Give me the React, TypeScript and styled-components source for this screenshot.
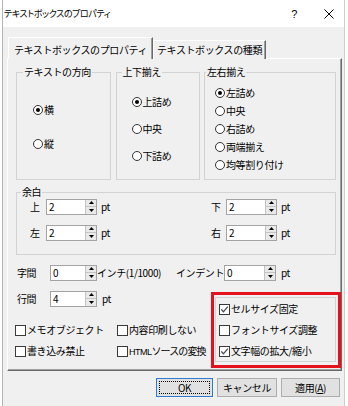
import React from "react";
import styled, { createGlobalStyle } from "styled-components";

const GlobalStyle = createGlobalStyle`
  html, body { margin: 0; padding: 0; background: #ffffff; }
  body {
    font-family: "Noto Sans CJK JP", "Noto Sans", sans-serif;
    font-size: 10px;
    letter-spacing: -0.4px;
    color: #000;
  }
  *, *::before, *::after { box-sizing: border-box; }
`;

const Screen = styled.div`
  width: 348px;
  height: 406px;
  overflow: hidden;
  background: #fff;
  padding-left: 2px;
`;

const Window = styled.div`
  width: 343px;
  height: 406px;
  border-left: 1px solid #b5b5b5;
  border-right: 1px solid #cdcdcd;
  background: #f0f0f0;
  display: flex;
  flex-direction: column;
`;

const TitleBar = styled.div`
  height: 27px;
  flex: none;
  background: #fff;
  display: flex;
  align-items: center;
  padding-left: 1px;
`;

const TitleText = styled.span`
  font-size: 9px;
  letter-spacing: -0.4px;
  font-feature-settings: "palt";
  line-height: 12px;
`;

const TitleButton = styled.span<{ $ml?: number }>`
  width: 30px;
  height: 27px;
  display: flex;
  align-items: center;
  justify-content: center;
  margin-left: ${(p) => (p.$ml === undefined ? "auto" : `${p.$ml}px`)};
  font-family: "Liberation Sans", sans-serif;
  font-size: 11px;
`;

const Body = styled.div`
  flex: 1;
  display: flex;
  flex-direction: column;
  padding: 10px 2px 0 4px;
`;

const TabBar = styled.div`
  display: flex;
  align-items: flex-end;
  height: 22px;
  padding-left: 1px;
  margin-bottom: -1px;
  position: relative;
  z-index: 1;
`;

const Tab = styled.div<{ $active?: boolean; $w: number }>`
  width: ${(p) => p.$w}px;
  height: ${(p) => (p.$active ? 22 : 19)}px;
  padding-top: ${(p) => (p.$active ? 3 : 0)}px;
  display: flex;
  align-items: center;
  justify-content: center;
  background: #f0f0f0;
  border-top: 1px solid #fff;
  border-left: 1px solid #fff;
  border-right: 1px solid #696969;
  box-shadow: inset -1px 0 0 #a0a0a0;
  line-height: 12px;
`;

const Panel = styled.div`
  width: 335px;
  height: 313px;
  border-top: 1px solid #fff;
  border-left: 1px solid #fff;
  border-right: 1px solid #696969;
  border-bottom: 1px solid #696969;
  box-shadow: inset -1px -1px 0 #a0a0a0;
  padding: 7px 0 0 8px;
  display: flex;
  flex-direction: column;
`;

const GroupRow = styled.div`
  display: flex;
  width: 320px;
  justify-content: space-between;
`;

const Group = styled.fieldset<{ $w: number; $h: number; $mt?: number }>`
  margin: ${(p) => p.$mt ?? 0}px 0 0 0;
  padding: 0;
  min-width: 0;
  width: ${(p) => p.$w}px;
  height: ${(p) => p.$h}px;
  border: 1px solid #d3d3d3;
  display: flex;
  flex-direction: column;
  justify-content: center;
`;

const Legend = styled.legend<{ $x: number }>`
  margin-left: ${(p) => p.$x}px;
  padding: 0 1px;
  height: 12px;
  line-height: 12px;
`;

const RadioList = styled.div<{ $pl: number; $gap: number; $pb?: number }>`
  display: flex;
  flex-direction: column;
  gap: ${(p) => p.$gap}px;
  padding-left: ${(p) => p.$pl}px;
  padding-bottom: ${(p) => p.$pb ?? 0}px;
`;

const OptionRow = styled.label`
  display: flex;
  align-items: center;
  gap: 1px;
  height: 12px;
  line-height: 12px;
  white-space: nowrap;
`;

const TightText = styled.span`
  letter-spacing: -0.9px;
`;

const Narrow = styled.span`
  font-family: "Liberation Sans Narrow", "Liberation Sans", sans-serif;
  font-size: 9px;
  letter-spacing: -0.5px;
`;

const RadioDot = styled.span<{ $on?: boolean }>`
  flex: none;
  width: 10px;
  height: 10px;
  border-radius: 50%;
  border: 1px solid #333;
  background: #fff;
  display: inline-flex;
  align-items: center;
  justify-content: center;
  &::after {
    content: "";
    width: 4px;
    height: 4px;
    border-radius: 50%;
    background: ${(p) => (p.$on ? "#000" : "transparent")};
  }
`;

const CheckBoxSquare = styled.span`
  flex: none;
  width: 11px;
  height: 11px;
  border: 1px solid #3a3a3a;
  background: #fff;
  display: inline-flex;
  align-items: center;
  justify-content: center;
`;

const MarginGrid = styled.div`
  display: grid;
  grid-template-columns: 181px auto;
  row-gap: 9px;
  padding-left: 13px;
`;

const FieldRow = styled.div<{ $mt?: number; $ml?: number }>`
  display: flex;
  align-items: center;
  height: 17px;
  margin-top: ${(p) => p.$mt ?? 0}px;
  margin-left: ${(p) => p.$ml ?? 0}px;
  white-space: nowrap;
`;

const FieldLabel = styled.span<{ $w: number; $mr: number; $ml?: number }>`
  width: ${(p) => p.$w}px;
  margin-right: ${(p) => p.$mr}px;
  margin-left: ${(p) => p.$ml ?? 0}px;
  line-height: 12px;
  flex: none;
`;

const Unit = styled.span<{ $ml: number; $w?: number }>`
  margin-left: ${(p) => p.$ml}px;
  width: ${(p) => (p.$w ? `${p.$w}px` : "auto")};
  line-height: 12px;
  flex: none;
`;

const SpinBox = styled.div<{ $w: number }>`
  width: ${(p) => p.$w}px;
  height: 16px;
  flex: none;
  display: flex;
  background: #fff;
  border: 1px solid #a3a3a3;
`;

const SpinValue = styled.span`
  flex: 1;
  padding-left: 2px;
  line-height: 14px;
  font-size: 10px;
`;

const SpinButtons = styled.div`
  width: 11px;
  display: flex;
  flex-direction: column;
  background: #e9e9e9;
  border-left: 1px solid #c4c4c4;
`;

const SpinArrow = styled.div<{ $top?: boolean }>`
  flex: 1;
  display: flex;
  align-items: center;
  justify-content: center;
  border-bottom: ${(p) => (p.$top ? "1px solid #c4c4c4" : "none")};
`;

const Lower = styled.div`
  display: flex;
  align-items: flex-start;
`;

const LeftCol = styled.div`
  width: 197px;
  display: flex;
  flex-direction: column;
`;

const CheckGrid = styled.div`
  display: grid;
  grid-template-columns: 102px auto;
  row-gap: 9px;
  margin-top: 17px;
  margin-left: -1px;
`;

const RedFrame = styled.div`
  margin-top: 11px;
  width: 130px;
  height: 76px;
  flex: none;
  border: 3px solid #e5121d;
  padding: 2px 2px 3px 1px;
  display: flex;
`;

const PlainGroup = styled.div`
  flex: 1;
  border: 1px solid #d3d3d3;
  padding: 5px 0 0 3px;
  display: flex;
  flex-direction: column;
  gap: 9px;
`;

const ButtonRow = styled.div`
  display: flex;
  justify-content: flex-end;
  gap: 4px;
  margin-top: 7px;
  padding-right: 2px;
`;

const DialogButton = styled.button<{ $w: number; $default?: boolean }>`
  width: ${(p) => p.$w}px;
  height: 19px;
  padding: 0;
  margin: 0;
  font-family: inherit;
  font-size: 10px;
  letter-spacing: -0.4px;
  color: #000;
  background: #e1e1e1;
  border: 1px solid ${(p) => (p.$default ? "#2f7bd4" : "#adadad")};
  outline: ${(p) => (p.$default ? "1px dotted #000" : "none")};
  outline-offset: -4px;
  line-height: 12px;
`;

const Up = () => (
  <svg width="5" height="3" viewBox="0 0 5 3">
    <polygon points="0,3 2.5,0 5,3" fill="#000" />
  </svg>
);
const Down = () => (
  <svg width="5" height="3" viewBox="0 0 5 3">
    <polygon points="0,0 5,0 2.5,3" fill="#000" />
  </svg>
);

const Spin = ({ value, w }: { value: string; w: number }) => (
  <SpinBox $w={w}>
    <SpinValue>{value}</SpinValue>
    <SpinButtons>
      <SpinArrow $top>
        <Up />
      </SpinArrow>
      <SpinArrow>
        <Down />
      </SpinArrow>
    </SpinButtons>
  </SpinBox>
);

const Radio = ({ label, on }: { label: string; on?: boolean }) => (
  <OptionRow>
    <RadioDot $on={on} />
    {label}
  </OptionRow>
);

const Check = ({ label, on }: { label: React.ReactNode; on?: boolean }) => (
  <OptionRow>
    <CheckBoxSquare>
      {on && (
        <svg width="9" height="9" viewBox="0 0 9 9">
          <polyline points="1.2,4.4 3.4,6.8 7.8,1.6" fill="none" stroke="#4a4a4a" strokeWidth="1.3" />
        </svg>
      )}
    </CheckBoxSquare>
    {label}
  </OptionRow>
);

export default function App() {
  return (
    <>
      <GlobalStyle />
      <Screen>
        <Window>
          <TitleBar>
            <TitleText>テキストボックスのプロパティ</TitleText>
            <TitleButton>?</TitleButton>
            <TitleButton $ml={5}>
              <svg width="10" height="10" viewBox="0 0 10 10">
                <path d="M0.5 0.5 L9.5 9.5 M9.5 0.5 L0.5 9.5" stroke="#000" strokeWidth="1" />
              </svg>
            </TitleButton>
          </TitleBar>
          <Body>
            <TabBar>
              <Tab $active $w={145}>テキストボックスのプロパティ</Tab>
              <Tab $w={113}>テキストボックスの種類</Tab>
            </TabBar>
            <Panel>
              <GroupRow>
                <Group $w={95} $h={114}>
                  <Legend $x={6}>テキストの方向</Legend>
                  <RadioList $pl={16} $gap={22} $pb={3}>
                    <Radio label="横" on />
                    <Radio label="縦" />
                  </RadioList>
                </Group>
                <Group $w={84} $h={114}>
                  <Legend $x={5}>上下揃え</Legend>
                  <RadioList $pl={15} $gap={15}>
                    <Radio label="上詰め" on />
                    <Radio label="中央" />
                    <Radio label="下詰め" />
                  </RadioList>
                </Group>
                <Group $w={132} $h={114}>
                  <Legend $x={1}>左右揃え</Legend>
                  <RadioList $pl={10} $gap={6}>
                    <Radio label="左詰め" on />
                    <Radio label="中央" />
                    <Radio label="右詰め" />
                    <Radio label="両端揃え" />
                    <Radio label="均等割り付け" />
                  </RadioList>
                </Group>
              </GroupRow>
              <Group $w={320} $h={69} $mt={6}>
                <Legend $x={4}>余白</Legend>
                <MarginGrid>
                  <FieldRow>
                    <FieldLabel $w={11} $mr={5}>上</FieldLabel>
                    <Spin value="2" w={51} />
                    <Unit $ml={4}>pt</Unit>
                  </FieldRow>
                  <FieldRow>
                    <FieldLabel $w={11} $mr={4}>下</FieldLabel>
                    <Spin value="2" w={51} />
                    <Unit $ml={4}>pt</Unit>
                  </FieldRow>
                  <FieldRow>
                    <FieldLabel $w={11} $mr={5}>左</FieldLabel>
                    <Spin value="2" w={51} />
                    <Unit $ml={4}>pt</Unit>
                  </FieldRow>
                  <FieldRow>
                    <FieldLabel $w={11} $mr={4}>右</FieldLabel>
                    <Spin value="2" w={51} />
                    <Unit $ml={4}>pt</Unit>
                  </FieldRow>
                </MarginGrid>
              </Group>
              <FieldRow $mt={9} $ml={1}>
                <FieldLabel $w={20} $mr={13}>字間</FieldLabel>
                <Spin value="0" w={47} />
                <Unit $ml={0} $w={79}>インチ(1/1000)</Unit>
                <FieldLabel $w={46} $mr={2}>インデント</FieldLabel>
                <Spin value="0" w={52} />
                <Unit $ml={5}>pt</Unit>
              </FieldRow>
              <Lower>
                <LeftCol>
                  <FieldRow $mt={9} $ml={1}>
                    <FieldLabel $w={20} $mr={13}>行間</FieldLabel>
                    <Spin value="4" w={47} />
                    <Unit $ml={5}>pt</Unit>
                  </FieldRow>
                  <CheckGrid>
                    <Check label="メモオブジェクト" />
                    <Check label="内容印刷しない" />
                    <Check label="書き込み禁止" />
                    <Check
                      label={
                        <TightText>
                          <Narrow>HTML</Narrow>ソースの変換
                        </TightText>
                      }
                    />
                  </CheckGrid>
                </LeftCol>
                <RedFrame>
                  <PlainGroup>
                    <Check label="セルサイズ固定" on />
                    <Check label="フォントサイズ調整" />
                    <Check label="文字幅の拡大/縮小" on />
                  </PlainGroup>
                </RedFrame>
              </Lower>
            </Panel>
            <ButtonRow>
              <DialogButton $w={57} $default>OK</DialogButton>
              <DialogButton $w={60}>キャンセル</DialogButton>
              <DialogButton $w={59}>
                適用(<u>A</u>)
              </DialogButton>
            </ButtonRow>
          </Body>
        </Window>
      </Screen>
    </>
  );
}
